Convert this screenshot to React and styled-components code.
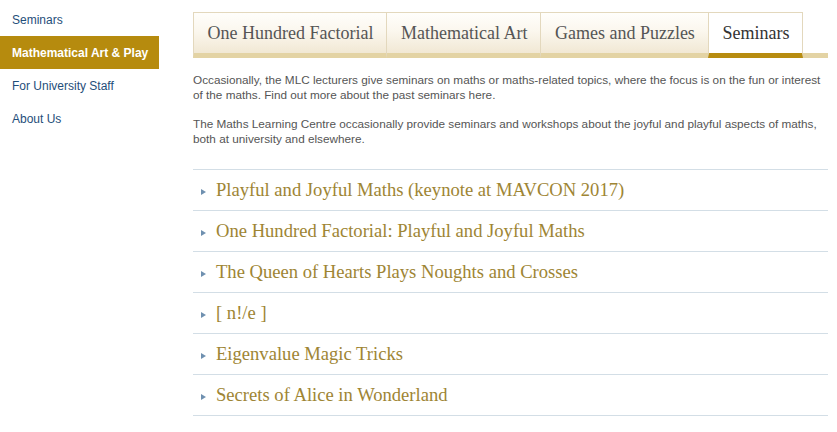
import React from "react";
import styled, { createGlobalStyle } from "styled-components";

const Global = createGlobalStyle`
  html, body { margin: 0; padding: 0; background: #fff; }
  body { font-family: "Liberation Sans", Arial, sans-serif; }
`;

const Page = styled.div`
  display: flex;
  gap: 34px;
  width: 837px;
  height: 432px;
  overflow: hidden;
  background: #fff;
`;

const Sidebar = styled.nav`
  width: 159px;
  flex: none;
  padding-top: 3px;
  display: flex;
  flex-direction: column;
`;

const NavItem = styled.a`
  display: flex;
  align-items: center;
  height: 33px;
  padding-left: 12px;
  font-size: 12px;
  text-decoration: none;
  color: ${(p) => (p.$active ? "#fff" : "#1f4e7a")};
  font-weight: ${(p) => (p.$active ? "bold" : "normal")};
  background: ${(p) => (p.$active ? "#b68b0e" : "transparent")};
`;

const Main = styled.main`
  width: 635px;
  flex: none;
  padding-top: 12px;
`;

const TabBar = styled.div`
  display: flex;
  border-bottom: 5px solid #e3d3a4;
`;

const Tab = styled.div`
  box-sizing: border-box;
  height: 46px;
  display: flex;
  align-items: center;
  padding: 0 13px 0 13.5px;
  margin-bottom: -5px;
  margin-left: -1px;
  border: 1px solid #e3d8bd;
  border-bottom: 5px solid ${(p) => (p.$active ? "#b78c10" : "transparent")};
  background: ${(p) =>
    p.$active
      ? "#fff"
      : "linear-gradient(to bottom, #fffefb 0%, #fbf7ee 45%, #f1e8d4 100%)"};
  background-clip: padding-box;
  font-family: "Liberation Serif", Georgia, serif;
  font-size: 18px;
  color: ${(p) => (p.$active ? "#333" : "#555")};
  white-space: nowrap;
  &:first-child { margin-left: 0; }
`;

const Intro = styled.p`
  margin: 14px 0 0;
  font-size: 11.75px;
  line-height: 15px;
  color: #555;
`;

const Accordion = styled.div`
  margin-top: 23px;
  border-bottom: 1px solid #d3dee6;
`;

const Row = styled.div`
  height: 40px;
  border-top: 1px solid #d3dee6;
  display: flex;
  align-items: center;
  padding-left: 8px;
  gap: 10px;
`;

const Arrow = styled.span`
  width: 0;
  height: 0;
  border-top: 3px solid transparent;
  border-bottom: 3px solid transparent;
  border-left: 5px solid #6f90b0;
  margin-top: 4px;
`;

const Title = styled.span`
  font-family: "Liberation Serif", Georgia, serif;
  font-size: 18.6px;
  color: #9e8534;
`;

const tabs = [
  { label: "One Hundred Factorial" },
  { label: "Mathematical Art" },
  { label: "Games and Puzzles" },
  { label: "Seminars", active: true },
];

const seminars = [
  "Playful and Joyful Maths (keynote at MAVCON 2017)",
  "One Hundred Factorial: Playful and Joyful Maths",
  "The Queen of Hearts Plays Noughts and Crosses",
  "[ n!/e ]",
  "Eigenvalue Magic Tricks",
  "Secrets of Alice in Wonderland",
];

export default function App() {
  return (
    <>
      <Global />
      <Page>
        <Sidebar>
          <NavItem href="#">Seminars</NavItem>
          <NavItem href="#" $active>
            Mathematical Art &amp; Play
          </NavItem>
          <NavItem href="#">For University Staff</NavItem>
          <NavItem href="#">About Us</NavItem>
        </Sidebar>
        <Main>
          <TabBar>
            {tabs.map((t) => (
              <Tab key={t.label} $active={t.active}>
                {t.label}
              </Tab>
            ))}
          </TabBar>
          <Intro>
            Occasionally, the MLC lecturers give seminars on maths or
            maths-related topics, where the focus is on the fun or interest of
            the maths. Find out more about the past seminars here.
          </Intro>
          <Intro>
            The Maths Learning Centre occasionally provide seminars and
            workshops about the joyful and playful aspects of maths, both at
            university and elsewhere.
          </Intro>
          <Accordion>
            {seminars.map((s) => (
              <Row key={s}>
                <Arrow />
                <Title>{s}</Title>
              </Row>
            ))}
          </Accordion>
        </Main>
      </Page>
    </>
  );
}
